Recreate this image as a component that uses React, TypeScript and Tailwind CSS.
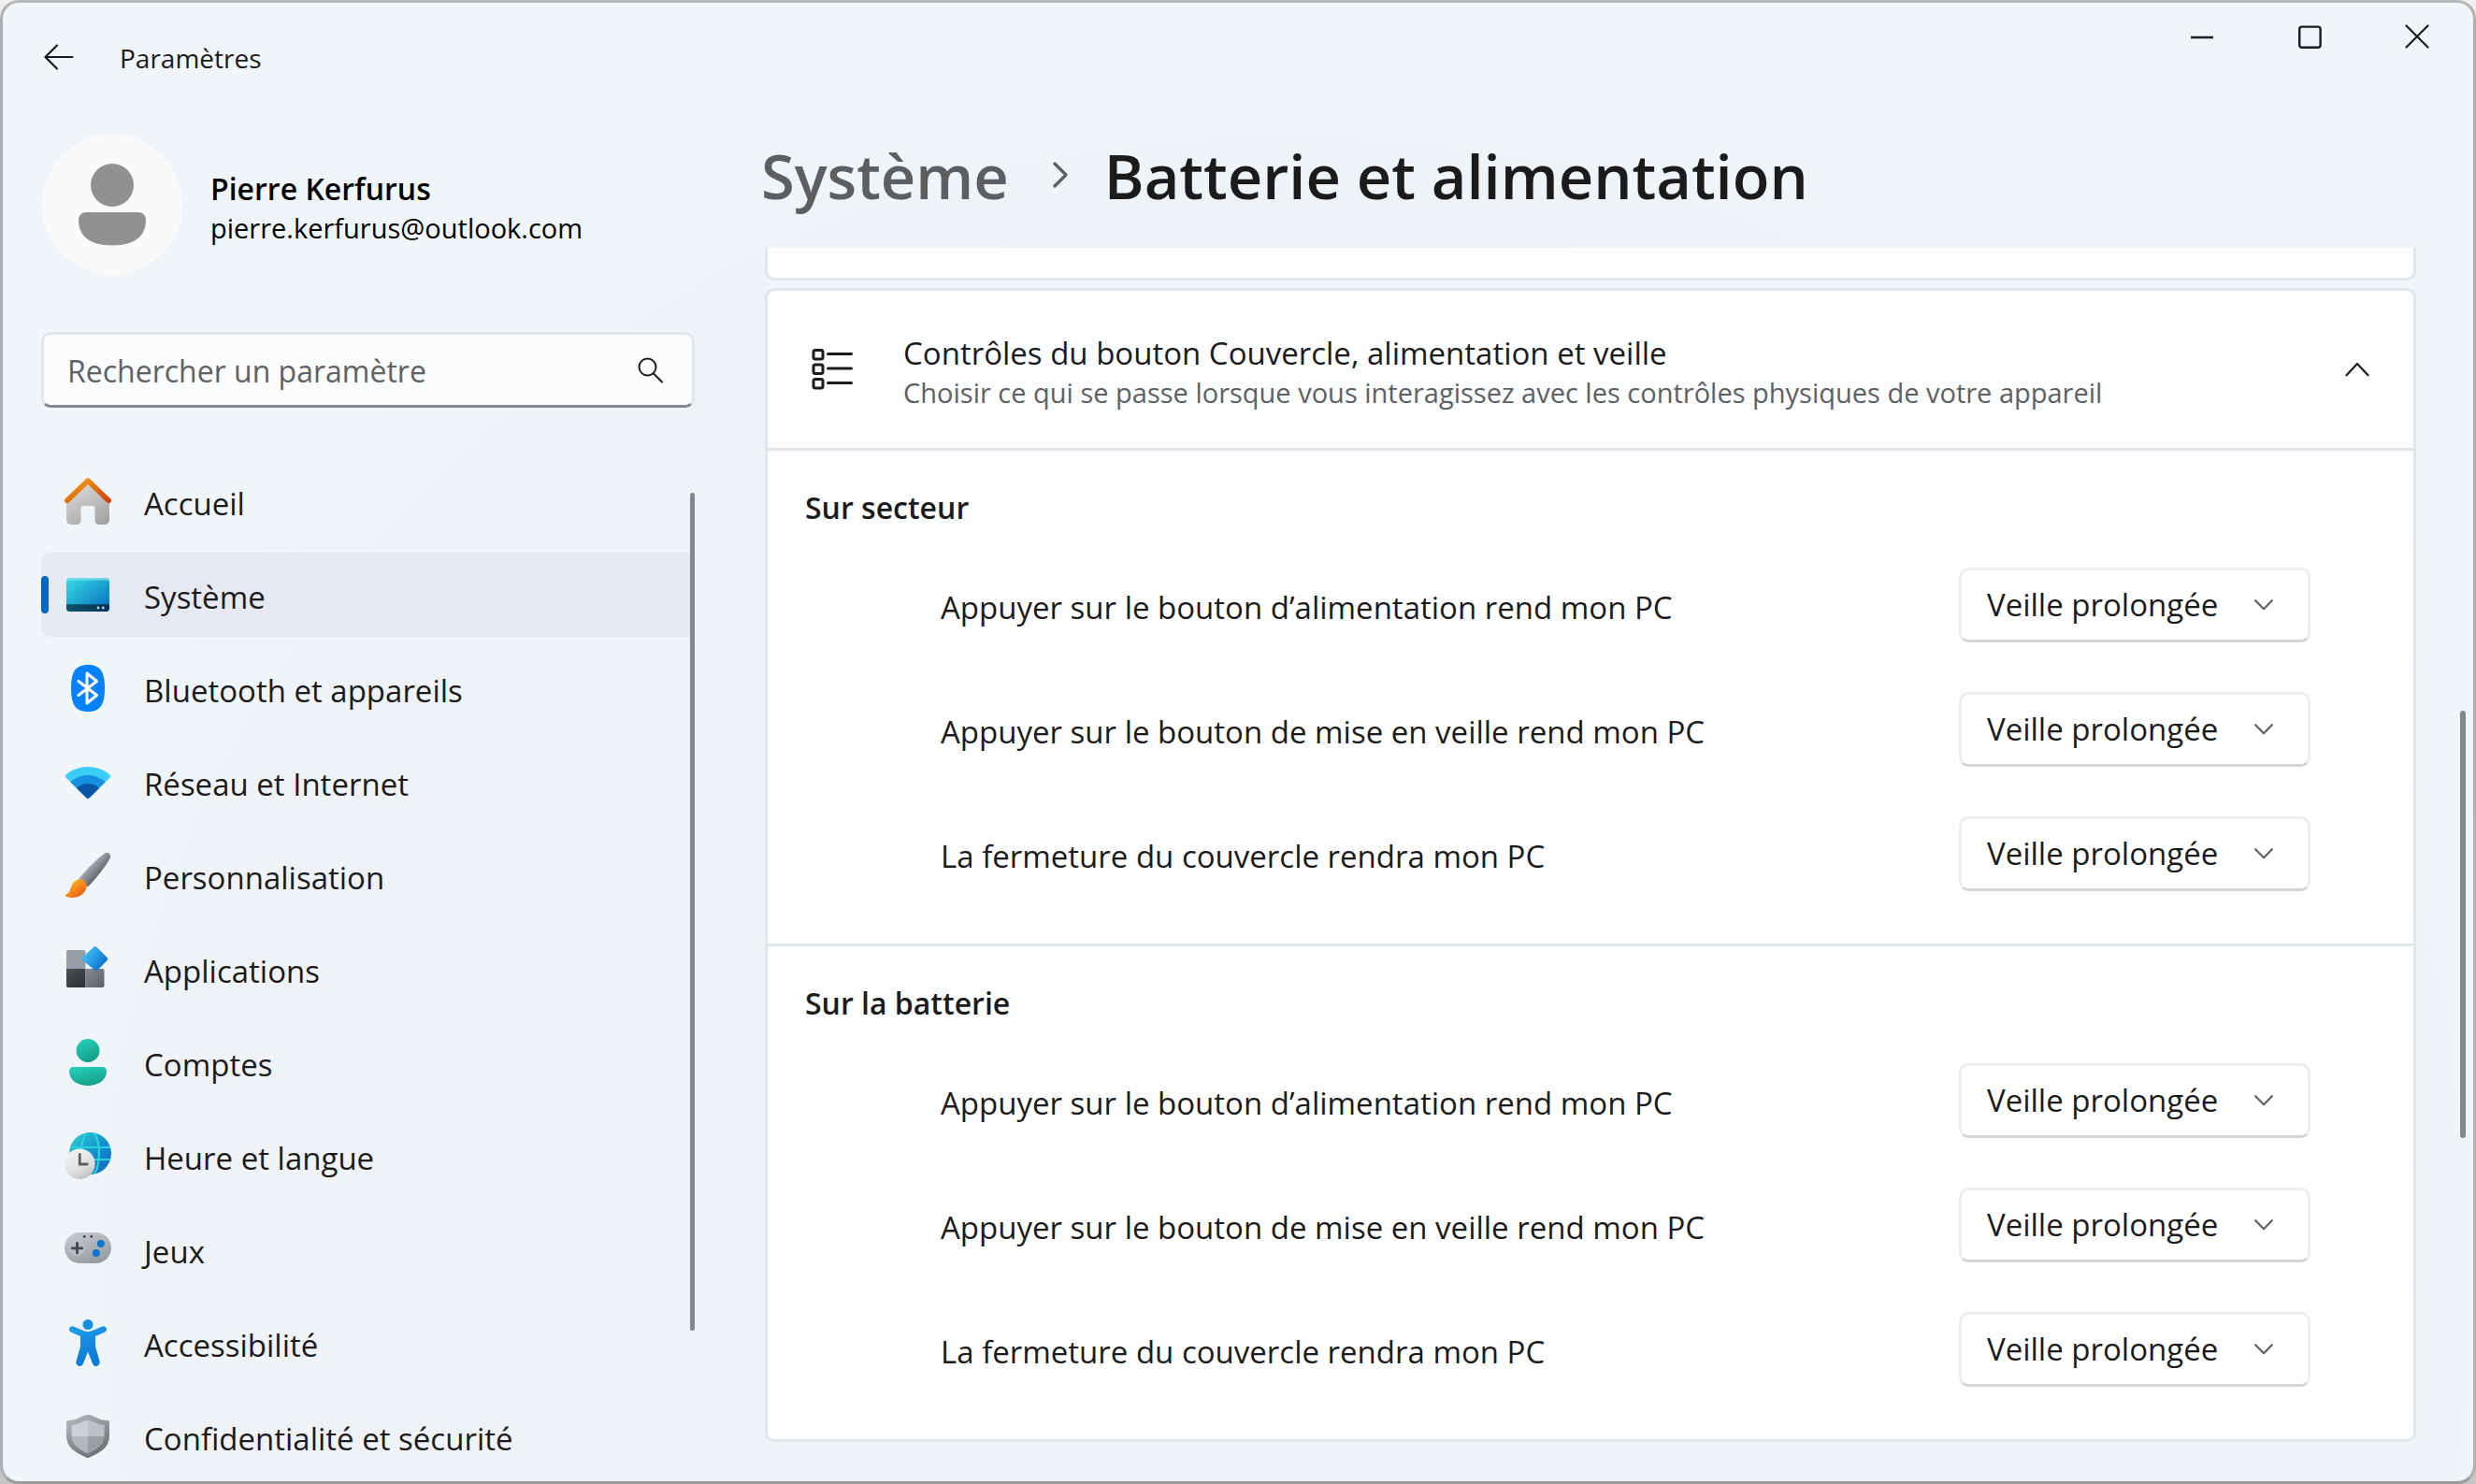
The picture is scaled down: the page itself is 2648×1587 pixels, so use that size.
import type { ReactNode } from "react";

function HomeIcon() {
  return (
    <svg viewBox="0 0 50 50" className="size-[50px] shrink-0" aria-hidden="true">
      <defs>
        <linearGradient id="homeWall" x1="0.2" y1="0" x2="0.8" y2="1">
          <stop offset="0" stopColor="#dcdcdc" />
          <stop offset="1" stopColor="#a3a3a3" />
        </linearGradient>
        <linearGradient id="homeRoof" x1="0" y1="0" x2="1" y2="1">
          <stop offset="0" stopColor="#f7a313" />
          <stop offset="1" stopColor="#d13f05" />
        </linearGradient>
      </defs>
      <path d="M2 24 25 4l23 20v21a5 5 0 0 1-5 5h-6a4.500 4.500 0 0 1-4.500-4.500V32.500a2.500 2.500 0 0 0-2.500-2.500h-10a2.500 2.500 0 0 0-2.500 2.500v13A4.500 4.500 0 0 1 13 50H7a5 5 0 0 1-5-5z" fill="url(#homeWall)" />
      <path d="M2.800 24.300 25 3l22.200 21.300" fill="none" stroke="url(#homeRoof)" strokeWidth="5.600" strokeLinecap="round" strokeLinejoin="round" />
    </svg>
  );
}

function SystemIcon() {
  return (
    <svg viewBox="0 0 50 50" className="size-[50px] shrink-0" aria-hidden="true">
      <defs>
        <linearGradient id="sysScreen" x1="0" y1="0" x2="1" y2="1">
          <stop offset="0" stopColor="#35dfe3" />
          <stop offset="1" stopColor="#0669bd" />
        </linearGradient>
        <linearGradient id="sysBar" x1="0" y1="0" x2="1" y2="0">
          <stop offset="0" stopColor="#0d5563" />
          <stop offset="1" stopColor="#06315a" />
        </linearGradient>
      </defs>
      <rect x="2" y="7" width="46" height="36" rx="4" fill="url(#sysScreen)" />
      <path d="M2 11a4 4 0 0 1 4-4h38a4 4 0 0 1 4 4c0-1-2-1.500-4-1.500H6c-2 0-4 .5-4 1.500z" fill="#7fe0ee" opacity="0.8" />
      <path d="M2 35.200h46V39a4 4 0 0 1-4 4H6a4 4 0 0 1-4-4z" fill="url(#sysBar)" />
      <circle cx="36" cy="39" r="1.400" fill="#c4d5e0" />
      <circle cx="41.300" cy="39" r="1.400" fill="#c4d5e0" />
    </svg>
  );
}

function BluetoothIcon() {
  return (
    <svg viewBox="0 0 50 50" className="size-[50px] shrink-0" aria-hidden="true">
      <path d="M25 0c13 0 18 7 18 25s-5 25-18 25S7 43 7 25 12 0 25 0z" fill="#0582ff" />
      <path d="m15 17.500 19.500 15L24 41V9l10.500 8.500-19.500 15" fill="none" stroke="#fff" strokeWidth="3" strokeLinecap="round" strokeLinejoin="round" />
    </svg>
  );
}

function NetworkIcon() {
  return (
    <svg viewBox="0 0 50 50" className="size-[50px] shrink-0" aria-hidden="true">
      <defs>
        <clipPath id="fan">
          <path d="M1.500 20.500q-1.200-1.500 0-3C15 6 35 6 48.500 17.500q1.200 1.500 0 3L26.500 42.300q-1.500 1-3 0z" />
        </clipPath>
      </defs>
      <g clipPath="url(#fan)">
        <rect width="50" height="50" fill="#3bcdf6" />
        <circle cx="25" cy="46" r="28" fill="#1490df" />
        <circle cx="25" cy="44" r="17" fill="#0a55a3" />
      </g>
    </svg>
  );
}

function BrushIcon() {
  return (
    <svg viewBox="0 0 50 50" className="size-[50px] shrink-0" aria-hidden="true">
      <defs>
        <linearGradient id="brushHandle" x1="0.350" y1="0.350" x2="0.650" y2="0.650">
          <stop offset="0" stopColor="#a9aeb6" />
          <stop offset="1" stopColor="#64686e" />
        </linearGradient>
        <linearGradient id="brushTip" x1="0.200" y1="0.100" x2="0.900" y2="0.900">
          <stop offset="0" stopColor="#fdbb25" />
          <stop offset="1" stopColor="#ea5312" />
        </linearGradient>
      </defs>
      <path d="M42.500 1.700c3.800-2.800 8.300 1.400 6 5.600C43 17 35 27 25 37.500L15 29C24 18 33 9 42.500 1.700z" fill="url(#brushHandle)" />
      <path d="M1.200 47.500c-.6-.6-.4-1.300.4-1.800C6 43 5.500 40.500 8 35.500 11 29.500 17 27.500 21.500 31c4 4.500 2 11.500-4 15.300C13 49.600 5 49.500 1.200 47.500z" fill="url(#brushTip)" />
    </svg>
  );
}

function AppsIcon() {
  return (
    <svg viewBox="0 0 50 50" className="size-[50px] shrink-0" aria-hidden="true">
      <defs>
        <linearGradient id="appDark" x1="0" y1="0" x2="1" y2="1">
          <stop offset="0" stopColor="#4f5255" />
          <stop offset="1" stopColor="#2b2e31" />
        </linearGradient>
        <linearGradient id="appMid" x1="0" y1="0" x2="1" y2="1">
          <stop offset="0" stopColor="#858a93" />
          <stop offset="1" stopColor="#5c6067" />
        </linearGradient>
        <linearGradient id="appBlue" x1="0.100" y1="0.300" x2="0.800" y2="0.800">
          <stop offset="0" stopColor="#3dbdf4" />
          <stop offset="1" stopColor="#0f74d3" />
        </linearGradient>
      </defs>
      <path d="M4 5h16.500a2 2 0 0 1 2 2v18H2V7a2 2 0 0 1 2-2z" fill="#979da7" />
      <path d="M2 25h20.500v20H4a2 2 0 0 1-2-2z" fill="url(#appDark)" />
      <path d="M22.500 25h18a2 2 0 0 1 2 2v16a2 2 0 0 1-2 2h-18z" fill="url(#appMid)" />
      <path d="M32.300 1.700q1.500-1.300 3 0l11.300 11.300q1.300 1.500 0 3l-10.300 10.500q-1.500 1.300-3 0L20.300 15.800q-1.300-1.500 0-3z" transform="translate(-1 0)" fill="url(#appBlue)" />
    </svg>
  );
}

function AccountsIcon() {
  return (
    <svg viewBox="0 0 50 50" className="size-[50px] shrink-0" aria-hidden="true">
      <defs>
        <linearGradient id="account" x1="0.300" y1="0" x2="0.700" y2="1">
          <stop offset="0" stopColor="#25cdb6" />
          <stop offset="1" stopColor="#129d88" />
        </linearGradient>
      </defs>
      <circle cx="25" cy="12.500" r="12.500" fill="url(#account)" />
      <path d="M9.500 30h31a4.500 4.500 0 0 1 4.500 4.500C45 45 35 50 25 50S5 45 5 34.500A4.500 4.500 0 0 1 9.500 30z" fill="url(#account)" />
    </svg>
  );
}

function TimeIcon() {
  return (
    <svg viewBox="0 0 50 50" className="size-[50px] shrink-0" aria-hidden="true">
      <defs>
        <linearGradient id="globe" x1="0" y1="0" x2="1" y2="1">
          <stop offset="0" stopColor="#2fd3cf" />
          <stop offset="0.600" stopColor="#0f8bcd" />
          <stop offset="1" stopColor="#0a62bd" />
        </linearGradient>
        <linearGradient id="clock" x1="0.200" y1="0" x2="0.700" y2="1">
          <stop offset="0" stopColor="#f6f6f6" />
          <stop offset="0.700" stopColor="#dcdcdc" />
          <stop offset="1" stopColor="#bdbdbd" />
        </linearGradient>
        <clipPath id="globeClip">
          <circle cx="27.500" cy="22.500" r="22.500" />
        </clipPath>
      </defs>
      <circle cx="27.500" cy="22.500" r="22.500" fill="url(#globe)" />
      <g clipPath="url(#globeClip)" fill="none" stroke="#2fd0dd" strokeWidth="2.200">
        <path d="M4 16h47M4 29h47" />
        <ellipse cx="27.500" cy="22.500" rx="9.500" ry="24" />
      </g>
      <circle cx="16.300" cy="33.700" r="16.300" fill="url(#clock)" />
      <path d="M16.300 23.500V34h8" fill="none" stroke="#5e5e5e" strokeWidth="2.800" strokeLinecap="round" />
    </svg>
  );
}

function GamesIcon() {
  return (
    <svg viewBox="0 0 50 50" className="size-[50px] shrink-0" aria-hidden="true">
      <defs>
        <linearGradient id="pad" x1="0.200" y1="0" x2="0.700" y2="1">
          <stop offset="0" stopColor="#c6cace" />
          <stop offset="1" stopColor="#949a9f" />
        </linearGradient>
      </defs>
      <rect x="0" y="7" width="50" height="33" rx="16.500" fill="url(#pad)" />
      <circle cx="13.500" cy="24" r="8.300" fill="#b9bdc2" />
      <path d="M13.500 18.500V29M8.200 23.800h10.600" stroke="#43474b" strokeWidth="2.800" strokeLinecap="round" />
      <circle cx="21.300" cy="11.300" r="1.400" fill="#3c3f43" />
      <circle cx="28.800" cy="11.300" r="1.400" fill="#3c3f43" />
      <circle cx="38.800" cy="19" r="4" fill="#0b74d1" />
      <circle cx="33.800" cy="29" r="4" fill="#0b74d1" />
    </svg>
  );
}

function AccessibilityIcon() {
  return (
    <svg viewBox="0 0 50 50" className="size-[50px] shrink-0" aria-hidden="true">
      <defs>
        <linearGradient id="person" x1="0.300" y1="0" x2="0.600" y2="1">
          <stop offset="0" stopColor="#1f9ae8" />
          <stop offset="1" stopColor="#0779d4" />
        </linearGradient>
      </defs>
      <circle cx="25" cy="5.500" r="5.500" fill="#168fe0" />
      <path d="M5.200 9.500c.7-2 2.500-2.700 4.300-2L21 12.300q4 1.500 8 0l11.500-4.800c1.800-.7 3.600 0 4.300 2s-.3 3.600-2 4.300L33 18v11l4.500 15.500c.6 2.400-.4 4.400-2.500 5.200s-4-.2-4.900-2.200L25 34.500l-5.100 13c-.9 2-2.800 3-4.900 2.200s-3.100-2.800-2.500-5.200L17 29V18L7.200 13.800c-1.700-.7-2.700-2.300-2-4.300z" fill="url(#person)" />
    </svg>
  );
}

function ShieldIcon() {
  return (
    <svg viewBox="0 0 50 50" className="size-[50px] shrink-0" aria-hidden="true">
      <defs>
        <linearGradient id="shield" x1="0.200" y1="0" x2="0.700" y2="1">
          <stop offset="0" stopColor="#b0b6bc" />
          <stop offset="1" stopColor="#686d73" />
        </linearGradient>
        <clipPath id="shieldInner">
          <path d="M25 8c6 0 8 4 17.500 5V24c0 9.500-6.500 14-17.500 19.500C14 38 7.500 33.500 7.500 24V13C17 12 19 8 25 8z" />
        </clipPath>
      </defs>
      <path d="M25 2c8 0 9 6 21.500 6Q48 8 48 10v14c0 13-9 18-23 24.300C11 42 2 37 2 24V10q0-2 1.500-2C16 8 17 2 25 2z" fill="url(#shield)" />
      <g clipPath="url(#shieldInner)">
        <rect width="25" height="25" fill="#ccd1d5" />
        <rect x="25" width="25" height="25" fill="#bcc1c5" />
        <rect y="25" width="25" height="25" fill="#b4b8bd" />
        <rect x="25" y="25" width="25" height="25" fill="#9a9fa4" />
      </g>
    </svg>
  );
}

const navItems: { label: string; icon: ReactNode; active?: boolean }[] = [
  { label: "Accueil", icon: <HomeIcon /> },
  { label: "Système", icon: <SystemIcon />, active: true },
  { label: "Bluetooth et appareils", icon: <BluetoothIcon /> },
  { label: "Réseau et Internet", icon: <NetworkIcon /> },
  { label: "Personnalisation", icon: <BrushIcon /> },
  { label: "Applications", icon: <AppsIcon /> },
  { label: "Comptes", icon: <AccountsIcon /> },
  { label: "Heure et langue", icon: <TimeIcon /> },
  { label: "Jeux", icon: <GamesIcon /> },
  { label: "Accessibilité", icon: <AccessibilityIcon /> },
  { label: "Confidentialité et sécurité", icon: <ShieldIcon /> },
];

const rows = [
  "Appuyer sur le bouton d’alimentation rend mon PC",
  "Appuyer sur le bouton de mise en veille rend mon PC",
  "La fermeture du couvercle rendra mon PC",
];

function TitleBar() {
  return (
    <header className="flex h-[116px] shrink-0 items-center">
      <button type="button" aria-label="Retour" className="ml-[42px] flex size-9 items-center justify-center">
        <svg viewBox="0 0 32 28" className="h-7 w-8" fill="none" stroke="#1b1b1b" strokeWidth="2.200" strokeLinecap="round" strokeLinejoin="round" aria-hidden="true">
          <path d="M30.500 14H1.500M14 1.500 1.500 14 14 26.500" />
        </svg>
      </button>
      <span className="ml-[47px] pt-0.5 text-[28px] leading-10">Paramètres</span>
      <div className="ml-auto flex self-start pr-[3px]">
        <button type="button" aria-label="Réduire" className="flex h-[72px] w-[115px] items-center justify-center">
          <svg viewBox="0 0 26 26" className="size-[26px]" stroke="#1b1b1b" strokeWidth="2.400" aria-hidden="true">
            <path d="M1 14h24" />
          </svg>
        </button>
        <button type="button" aria-label="Agrandir" className="flex h-[72px] w-[115px] items-center justify-center">
          <svg viewBox="0 0 26 26" className="size-[26px]" fill="none" stroke="#1b1b1b" strokeWidth="2.400" aria-hidden="true">
            <rect x="2.200" y="2.600" width="22.400" height="22.200" rx="2.500" />
          </svg>
        </button>
        <button type="button" aria-label="Fermer" className="flex h-[72px] w-[115px] items-center justify-center">
          <svg viewBox="0 0 26 26" className="size-[26px]" stroke="#1b1b1b" strokeWidth="2.200" strokeLinecap="round" aria-hidden="true">
            <path d="m1.500 1.500 23 23M24.500 1.500l-23 23" />
          </svg>
        </button>
      </div>
    </header>
  );
}

function Sidebar() {
  return (
    <aside className="flex w-[740px] shrink-0 flex-col pl-[41px]">
      <div className="mt-[25px] flex h-[150px] shrink-0 items-center pl-px">
        <svg viewBox="0 0 150 150" className="size-[150px]" aria-hidden="true">
          <circle cx="75" cy="75" r="75" fill="#fafafb" />
          <circle cx="75" cy="54" r="23" fill="#919191" />
          <path d="M47 83h56a8 8 0 0 1 8 8c0 19-14 27.500-36 27.500S39 110 39 91a8 8 0 0 1 8-8z" fill="#919191" />
        </svg>
        <div className="ml-[30px] pt-1.5 text-black">
          <p className="text-[32px] font-semibold leading-[44px]">Pierre Kerfurus</p>
          <p className="text-[29px] leading-10">pierre.kerfurus@outlook.com</p>
        </div>
      </div>

      <div className="mt-[61px] flex h-[81px] shrink-0 items-center rounded-[10px] border-[3px] border-[#e2e6ea] border-b-[#858788] bg-[#fbfcfe]">
        <input
          type="text"
          aria-label="Rechercher un paramètre"
          placeholder="Rechercher un paramètre"
          className="h-full min-w-0 flex-1 bg-transparent pl-[25px] pt-0.5 text-[32px] leading-[48px] outline-none placeholder:text-[#606163]"
        />
        <svg viewBox="0 0 28 28" className="mr-[30px] size-7" fill="none" stroke="#1b1b1b" strokeWidth="2" strokeLinecap="round" aria-hidden="true">
          <circle cx="10.500" cy="10.500" r="9" />
          <path d="m17 17.500 9 9" />
        </svg>
      </div>

      <div className="mt-[55px] flex min-h-0 flex-1">
        <nav aria-label="Catégories" className="flex-1 overflow-hidden">
          <ul className="flex flex-col gap-[10px]">
            {navItems.map((item) => (
              <li key={item.label}>
                <a
                  href="#"
                  aria-current={item.active ? "page" : undefined}
                  className={
                    item.active
                      ? "relative flex h-[90px] items-center rounded-l-[10px] bg-[#e6e9f1] pl-[25px]"
                      : "flex h-[90px] items-center pl-[25px]"
                  }
                >
                  {item.active && <span className="absolute left-0 h-10 w-2 rounded-full bg-[#0467c0]" />}
                  {item.icon}
                  <span className="ml-[35px] whitespace-nowrap pt-1.5 text-[33px] leading-[44px]">{item.label}</span>
                </a>
              </li>
            ))}
          </ul>
        </nav>
        <div className="mt-9 h-[82%] w-[5px] shrink-0 rounded-full bg-[#858789]" />
      </div>
    </aside>
  );
}

function PowerSelect({ id }: { id: string }) {
  return (
    <div className="relative">
      <select
        id={id}
        className="h-20 w-[376px] appearance-none rounded-[10px] border-[3px] border-[#eeeeee] border-b-[#d4d4d4] bg-white pl-[27px] pr-20 text-[33px] leading-[44px]"
      >
        <option>Veille prolongée</option>
        <option>Ne rien faire</option>
        <option>Arrêter</option>
      </select>
      <svg viewBox="0 0 20 12" className="pointer-events-none absolute right-10 top-[34px] h-3 w-5" fill="none" stroke="#606060" strokeWidth="2.200" strokeLinecap="round" strokeLinejoin="round" aria-hidden="true">
        <path d="m1.200 1.200 8.800 9 8.800-9" />
      </svg>
    </div>
  );
}

function PowerSection({ title, prefix }: { title: string; prefix: string }) {
  return (
    <section className="border-t-[3px] border-[#e2e5e9] pb-[35px] pl-10">
      <h3 className="pb-4 pt-[37px] text-[32px] font-semibold leading-[48px]">{title}</h3>
      <div className="flex flex-col gap-2">
        {rows.map((row, i) => (
          <div key={row} className="flex h-[125px] items-center justify-between bg-[#fefefe] pl-[145px] pr-[110px] pt-[3px]">
            <label htmlFor={`${prefix}-${i}`} className="pt-1.5 text-[33px] leading-[44px]">
              {row}
            </label>
            <PowerSelect id={`${prefix}-${i}`} />
          </div>
        ))}
      </div>
    </section>
  );
}

function Content() {
  return (
    <main className="flex min-w-0 flex-1 flex-col">
      <div className="flex h-[146px] shrink-0 items-start pl-[71px] pt-[23px] text-[65px] font-semibold leading-[92px]">
        <a href="#" className="text-[#5d5e60]">
          Système
        </a>
        <svg viewBox="0 0 18 28" className="ml-[46px] mt-[31px] h-7 w-[18px]" fill="none" stroke="#5d5e60" strokeWidth="3.200" strokeLinecap="round" strokeLinejoin="round" aria-hidden="true">
          <path d="m3 2 12 12L3 26" />
        </svg>
        <h1 className="ml-[38px]">Batterie et alimentation</h1>
      </div>

      <div className="flex min-h-0 flex-1">
        <div className="ml-[75px] min-w-0 flex-1">
          <div className="h-[35px] rounded-b-[10px] border-[3px] border-t-0 border-[#e2e5e9] bg-[#fcfdfe]" />
          <div className="mt-2 rounded-[10px] border-[3px] border-[#e2e5e9] bg-[#fcfdfe]">
            <button type="button" aria-expanded="true" className="flex h-[168px] w-full items-center pl-[47px] pr-[47px] text-left">
              <svg viewBox="0 0 46 46" className="size-[46px] shrink-0" fill="none" stroke="#1b1b1b" strokeWidth="3" strokeLinecap="round" aria-hidden="true">
                <rect x="2" y="2.500" width="10" height="9.500" rx="2" />
                <rect x="2" y="18" width="10" height="9.500" rx="2" />
                <rect x="2" y="33.500" width="10" height="9.500" rx="2" />
                <path d="M17.500 6.500h25M17.500 22h25M17.500 37.500h25" />
              </svg>
              <span className="ml-[52px] flex-1 pt-1.5">
                <span className="block text-[33px] leading-[44px]">Contrôles du bouton Couvercle, alimentation et veille</span>
                <span className="block text-[29px] leading-10 text-[#5f6062]">
                  Choisir ce qui se passe lorsque vous interagissez avec les contrôles physiques de votre appareil
                </span>
              </span>
              <svg viewBox="0 0 26 16" className="h-4 w-[26px] shrink-0" fill="none" stroke="#1b1b1b" strokeWidth="2.200" strokeLinecap="round" strokeLinejoin="round" aria-hidden="true">
                <path d="M1.500 14.200 13 2l11.500 12.200" />
              </svg>
            </button>
            <PowerSection title="Sur secteur" prefix="ac" />
            <PowerSection title="Sur la batterie" prefix="dc" />
          </div>
        </div>
        <div className="ml-[47px] mr-2 w-1.5 shrink-0">
          <div className="h-[37.500%]" />
          <div className="h-[34.700%] rounded-full bg-[#858789]" />
        </div>
      </div>
    </main>
  );
}

export default function App() {
  return (
    <div className="h-screen bg-linear-to-b from-[#f0f0f0] to-[#c4c4c4] font-['Open_Sans','Noto_Sans',sans-serif] text-[#1b1b1b]">
      <div className="flex h-full flex-col overflow-hidden rounded-[20px] border-[3px] border-x-[#b0b0b0] border-b-[#9b9b9d] border-t-[#b9b9b9] bg-[#eff5f9] bg-[radial-gradient(48%_76%_at_52%_85%,#eff2f7_85%,#eff5f9_108%)]">
        <TitleBar />
        <div className="flex min-h-0 flex-1">
          <Sidebar />
          <Content />
        </div>
      </div>
    </div>
  );
}
